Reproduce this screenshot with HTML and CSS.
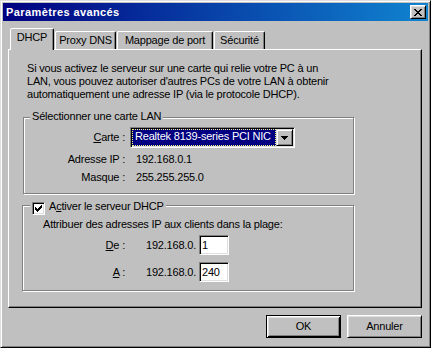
FILE: index.html
```html
<!DOCTYPE html>
<html lang="fr">
<head>
    <meta charset="UTF-8">
    <meta name="viewport" content="width=device-width, initial-scale=1.0">
    <title>Paramètres avancés</title>
    <link rel="stylesheet" href="styles.css">
</head>
<body>
    <div class="window">
        <div class="titlebar">
            <span class="title">Paramètres avancés</span>
            <button class="close-btn" aria-label="Fermer">
                <svg width="8" height="7" viewBox="0 0 8 7" shape-rendering="crispEdges">
                    <path d="M0 0h2v1h-2z M6 0h2v1h-2z M1 1h2v1h-2z M5 1h2v1h-2z M2 2h4v1h-4z M3 3h2v1h-2z M2 4h4v1h-4z M1 5h2v1h-2z M5 5h2v1h-2z M0 6h2v1h-2z M6 6h2v1h-2z"/>
                </svg>
            </button>
        </div>

        <div class="tabs">
            <div class="tab tab-dhcp active">DHCP</div>
            <div class="tab tab-proxy">Proxy DNS</div>
            <div class="tab tab-port">Mappage de port</div>
            <div class="tab tab-security">Sécurité</div>
        </div>

        <div class="panel">
            <p class="intro">Si vous activez le serveur sur une carte qui relie votre PC à un<br>LAN, vous pouvez autoriser d'autres PCs de votre LAN à obtenir<br>automatiquement une adresse IP (via le protocole DHCP).</p>

            <div class="group group-lan">
                <div class="group-title">Sélectionner une carte LAN</div>
                <div class="field-row combo-row">
                    <span class="field-label"><u>C</u>arte :</span>
                    <div class="combo">
                        <span class="combo-value">Realtek 8139-series PCI NIC</span>
                        <span class="combo-btn">
                            <svg width="7" height="4" viewBox="0 0 7 4" shape-rendering="crispEdges">
                                <path d="M0 0h7v1h-7z M1 1h5v1h-5z M2 2h3v1h-3z M3 3h1v1h-1z"/>
                            </svg>
                        </span>
                    </div>
                </div>
                <div class="field-row info-row">
                    <span class="field-label">Adresse IP :</span>
                    <span class="field-value">192.168.0.1</span>
                </div>
                <div class="field-row info-row">
                    <span class="field-label">Masque :</span>
                    <span class="field-value">255.255.255.0</span>
                </div>
            </div>

            <div class="group group-dhcp">
                <div class="group-title check-title">
                    <span class="checkbox">
                        <svg width="9" height="9" viewBox="0 0 9 9" shape-rendering="crispEdges">
                            <path d="M7 1h1v1h-1z M6 2h2v1h-2z M1 3h1v1h-1z M5 3h3v1h-3z M1 4h2v1h-2z M4 4h3v1h-3z M1 5h5v1h-5z M2 6h3v1h-3z M3 7h1v1h-1z"/>
                        </svg>
                    </span>
                    <span>A<u>c</u>tiver le serveur DHCP</span>
                </div>
                <p class="range-hint">Attribuer des adresses IP aux clients dans la plage:</p>
                <div class="range-row">
                    <span class="range-label"><u>D</u>e :</span>
                    <span class="range-prefix">192.168.0.</span>
                    <input class="range-input" type="text" value="1">
                </div>
                <div class="range-row">
                    <span class="range-label"><u>A</u> :</span>
                    <span class="range-prefix">192.168.0.</span>
                    <input class="range-input" type="text" value="240">
                </div>
            </div>
        </div>

        <div class="actions">
            <button class="btn btn-default">OK</button>
            <button class="btn">Annuler</button>
        </div>
    </div>
</body>
</html>
```

FILE: styles.css
```css
* {
    box-sizing: border-box;
}

body {
    margin: 0;
    font-family: 'Liberation Sans', Arial, sans-serif;
    font-size: 11px;
    line-height: 13px;
    letter-spacing: -0.2px;
    color: #000;
    background-color: #c0c0c0;
}

.window {
    width: 431px;
    height: 348px;
    padding: 2px;
    background-color: #c0c0c0;
    border: 1px solid;
    border-color: #dfdfdf #000 #000 #dfdfdf;
    box-shadow: inset 1px 1px #fff, inset -1px -1px #808080;
}

/* title bar */
.titlebar {
    height: 18px;
    display: flex;
    align-items: center;
    justify-content: space-between;
    padding: 0 2px 0 3px;
    background: linear-gradient(to right, #000080, #1084d0);
}

.title {
    color: #fff;
    font-weight: bold;
    letter-spacing: 0.4px;
}

.close-btn {
    width: 16px;
    height: 14px;
    padding: 0;
    display: flex;
    align-items: center;
    justify-content: center;
    background-color: #c0c0c0;
    border: 1px solid;
    border-color: #fff #000 #000 #fff;
    box-shadow: inset 1px 1px #dfdfdf, inset -1px -1px #808080;
}

/* tabs */
.tabs {
    display: flex;
    align-items: flex-end;
    height: 21px;
    margin-top: 7px;
    padding-left: 7px;
}

.tab {
    height: 18px;
    margin-right: 1px;
    padding-top: 2px;
    text-align: center;
    white-space: nowrap;
    border: 1px solid;
    border-bottom: none;
    border-color: #fff #000 transparent #fff;
    border-radius: 2px 2px 0 0;
    box-shadow: inset -1px 0 #808080;
}

.tab.active {
    position: relative;
    z-index: 1;
    height: 22px;
    margin-bottom: -1px;
    background-color: #c0c0c0;
}

.tab-dhcp { width: 44px; }
.tab-proxy { width: 61px; }
.tab-port { width: 96px; }
.tab-security { width: 51px; }

/* tab page */
.panel {
    width: 414px;
    height: 259px;
    margin-left: 5px;
    padding: 12px 0 0 14px;
    border: 1px solid;
    border-color: #fff #000 #000 #fff;
    box-shadow: inset -1px -1px #808080;
}

.intro {
    margin: 0 0 0 4px;
    white-space: nowrap;
}

/* group boxes */
.group {
    border: 1px solid #808080;
    box-shadow: 1px 1px #fff, inset 1px 1px #fff;
}

.group-lan {
    width: 331px;
    height: 77px;
    margin-top: 16px;
}

.group-dhcp {
    width: 332px;
    height: 86px;
    margin: 11px 0 0 -1px;
}

.group-title {
    width: fit-content;
    margin: -8px 0 0 6px;
    padding: 0 2px;
    background-color: #c0c0c0;
}

.field-row {
    display: flex;
    align-items: center;
}

.field-label {
    width: 101px;
    text-align: right;
    white-space: nowrap;
}

.field-value {
    margin-left: 11px;
}

.combo-row {
    margin-top: 4px;
}

.info-row {
    margin-top: 5px;
}

.combo {
    width: 165px;
    height: 21px;
    margin-left: 5px;
    padding: 1px;
    display: flex;
    background-color: #fff;
    border: 1px solid;
    border-color: #808080 #fff #fff #808080;
    box-shadow: inset 1px 1px #000, inset -1px -1px #dfdfdf;
}

.combo-value {
    flex: 1;
    min-width: 0;
    padding-left: 2px;
    overflow: hidden;
    color: #fff;
    white-space: nowrap;
    background-color: #000080;
    border: 1px dotted #ffff7f;
}

.combo-btn {
    width: 17px;
    flex-shrink: 0;
    display: flex;
    align-items: center;
    justify-content: center;
    background-color: #c0c0c0;
    border: 1px solid;
    border-color: #dfdfdf #000 #000 #dfdfdf;
    box-shadow: inset 1px 1px #fff, inset -1px -1px #808080;
}

/* DHCP range */
.check-title {
    display: flex;
    align-items: flex-start;
    gap: 4px;
    margin: -6px 0 0 7px;
}

.checkbox {
    width: 13px;
    height: 13px;
    margin-top: 2px;
    padding: 1px;
    display: block;
    background-color: #fff;
    border: 1px solid;
    border-color: #808080 #fff #fff #808080;
    box-shadow: inset 1px 1px #000, inset -1px -1px #dfdfdf;
}

.checkbox svg {
    display: block;
}

.range-hint {
    margin: 3px 0 0 20px;
    white-space: nowrap;
}

.range-row {
    display: flex;
    align-items: center;
    margin-top: 4px;
}

.range-row + .range-row {
    margin-top: 7px;
}

.range-label {
    width: 102px;
    text-align: right;
}

.range-prefix {
    width: 53px;
    margin-left: 21px;
}

.range-input {
    width: 30px;
    height: 20px;
    padding: 0 2px;
    font: inherit;
    letter-spacing: inherit;
    color: #000;
    background-color: #fff;
    border: 1px solid;
    border-color: #808080 #fff #fff #808080;
    box-shadow: inset 1px 1px #000, inset -1px -1px #dfdfdf;
    outline: none;
}

/* dialog buttons */
.actions {
    display: flex;
    justify-content: flex-end;
    gap: 6px;
    margin: 7px 6px 0 0;
}

.btn {
    width: 75px;
    height: 23px;
    padding: 0;
    font: inherit;
    letter-spacing: inherit;
    color: #000;
    background-color: #c0c0c0;
    border: 1px solid;
    border-color: #fff #000 #000 #fff;
    box-shadow: inset 1px 1px #dfdfdf, inset -1px -1px #808080;
}

.btn-default {
    border-color: #000;
    box-shadow: inset 1px 1px #fff, inset -1px -1px #000, inset 2px 2px #dfdfdf, inset -2px -2px #808080;
}
```
